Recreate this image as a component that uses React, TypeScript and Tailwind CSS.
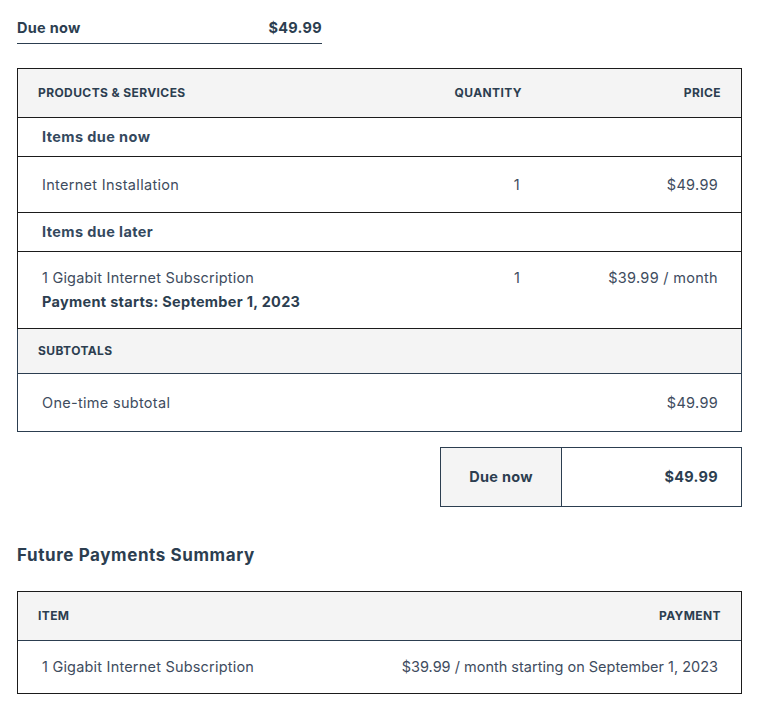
import React from "react";

const ink = "text-[#2c3e50]";

function HeaderCell({ children, right }: { children: React.ReactNode; right?: boolean }) {
  return (
    <div
      className={`flex items-center text-[12px] font-bold uppercase tracking-[0.4px] text-[#2c3e50] ${
        right ? "justify-end pr-[20px]" : "pl-[20px]"
      }`}
    >
      {children}
    </div>
  );
}

export default function App() {
  return (
    <div
      className="min-h-[715px] bg-white px-[17px] pt-[18px] pb-[20px]"
      style={{ fontFamily: "Inter, 'Open Sans', sans-serif" }}
    >
      {/* Due now summary */}
      <div className="flex w-[305px] items-center justify-between border-b border-[#2c3e50] pb-[5px] text-[14.5px] font-bold leading-[20px] tracking-[0.3px] text-[#2c3e50]">
        <span>Due now</span>
        <span>$49.99</span>
      </div>

      {/* Products table */}
      <div className="mt-[24px] w-[725px]">
        <div className="border-x border-t border-[#1b1b1b]">
          <div className="grid h-[49px] grid-cols-[1fr_120px_199px] border-b border-[#1b1b1b] bg-[#f4f4f4]">
            <HeaderCell>Products &amp; Services</HeaderCell>
            <HeaderCell right>Quantity</HeaderCell>
            <HeaderCell right>Price</HeaderCell>
          </div>

          <div className="flex h-[39px] items-center border-b border-[#1b1b1b] pl-[24px] text-[14.5px] font-bold tracking-[0.4px] text-[#34495e]">
            Items due now
          </div>

          <div className="grid h-[56px] grid-cols-[1fr_120px_199px] items-center border-b border-[#1b1b1b] text-[14.5px] tracking-[0.3px] text-[#3e4c5e]">
            <div className="pl-[24px]">Internet Installation</div>
            <div className="pr-[22px] text-right">1</div>
            <div className="pr-[23px] text-right">$49.99</div>
          </div>

          <div className="flex h-[39px] items-center border-b border-[#1b1b1b] pl-[24px] text-[14.5px] font-bold tracking-[0.4px] text-[#34495e]">
            Items due later
          </div>

          <div className="grid h-[77px] grid-cols-[1fr_120px_199px] border-b border-[#1b1b1b] pt-[14px] text-[14.5px] leading-[24px] tracking-[0.2px] text-[#3e4c5e]">
            <div className="flex flex-col pl-[24px]">
              <span>1 Gigabit Internet Subscription</span>
              <span className="font-bold tracking-[0.3px] text-[#2c3e50]">Payment starts: September 1, 2023</span>
            </div>
            <div className="pr-[22px] text-right">1</div>
            <div className="pr-[23px] text-right tracking-[0.3px]">$39.99 / month</div>
          </div>
        </div>

        <div className="border-x border-b border-[#2c3e50]">
          <div className="flex h-[45px] items-center border-b border-[#2c3e50] bg-[#f4f4f4] pl-[20px] text-[12px] font-bold uppercase tracking-[0.4px] text-[#2c3e50]">
            Subtotals
          </div>
          <div className="flex h-[57px] items-center justify-between pl-[24px] pr-[23px] text-[14.5px] tracking-[0.3px] text-[#3e4c5e]">
            <span>One-time subtotal</span>
            <span>$49.99</span>
          </div>
        </div>
      </div>

      {/* Due now box */}
      <div className="mt-[15px] flex w-[725px] justify-end">
        <div className="grid h-[60px] w-[302px] grid-cols-[121px_1fr] border border-[#2c3e50] text-[14.5px] font-bold tracking-[0.3px] text-[#2c3e50]">
          <div className="flex items-center justify-center border-r border-[#2c3e50] bg-[#f4f4f4]">Due now</div>
          <div className="flex items-center justify-end pr-[23px]">$49.99</div>
        </div>
      </div>

      {/* Future payments */}
      <h2 className={`mt-[36px] text-[17px] font-bold leading-[24px] tracking-[0.6px] ${ink}`}>
        Future Payments Summary
      </h2>

      <div className="mt-[24px] w-[725px] border border-[#1b1b1b]">
        <div className="grid h-[49px] grid-cols-[1fr_1fr] border-b border-[#2c3e50] bg-[#f4f4f4]">
          <HeaderCell>Item</HeaderCell>
          <HeaderCell right>Payment</HeaderCell>
        </div>
        <div className="flex h-[52px] items-center justify-between pl-[24px] pr-[23px] text-[14.5px] text-[#3e4c5e]">
          <span className="tracking-[0.2px]">1 Gigabit Internet Subscription</span>
          <span>$39.99 / month starting on September 1, 2023</span>
        </div>
      </div>
    </div>
  );
}
